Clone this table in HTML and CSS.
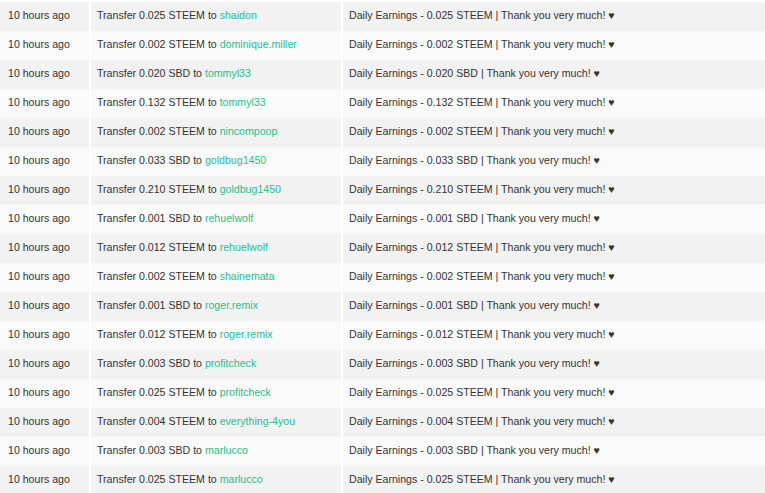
FILE: index.html
```html
<!DOCTYPE html>
<html lang="en">
<head>
    <meta charset="UTF-8">
    <title>Transfer History</title>
    <link rel="stylesheet" href="styles.css">
</head>
<body>

<table class="history">
    <colgroup>
        <col class="col-time">
        <col class="col-op">
        <col class="col-memo">
    </colgroup>
    <tbody>
        <tr><td>10 hours ago</td><td>Transfer 0.025 STEEM to <a href="#">shaidon</a></td><td>Daily Earnings - 0.025 STEEM | Thank you very much! &hearts;</td></tr>
        <tr><td>10 hours ago</td><td>Transfer 0.002 STEEM to <a href="#">dominique.miller</a></td><td>Daily Earnings - 0.002 STEEM | Thank you very much! &hearts;</td></tr>
        <tr><td>10 hours ago</td><td>Transfer 0.020 SBD to <a href="#">tommyl33</a></td><td>Daily Earnings - 0.020 SBD | Thank you very much! &hearts;</td></tr>
        <tr><td>10 hours ago</td><td>Transfer 0.132 STEEM to <a href="#">tommyl33</a></td><td>Daily Earnings - 0.132 STEEM | Thank you very much! &hearts;</td></tr>
        <tr><td>10 hours ago</td><td>Transfer 0.002 STEEM to <a href="#">nincompoop</a></td><td>Daily Earnings - 0.002 STEEM | Thank you very much! &hearts;</td></tr>
        <tr><td>10 hours ago</td><td>Transfer 0.033 SBD to <a href="#">goldbug1450</a></td><td>Daily Earnings - 0.033 SBD | Thank you very much! &hearts;</td></tr>
        <tr><td>10 hours ago</td><td>Transfer 0.210 STEEM to <a href="#">goldbug1450</a></td><td>Daily Earnings - 0.210 STEEM | Thank you very much! &hearts;</td></tr>
        <tr><td>10 hours ago</td><td>Transfer 0.001 SBD to <a href="#">rehuelwolf</a></td><td>Daily Earnings - 0.001 SBD | Thank you very much! &hearts;</td></tr>
        <tr><td>10 hours ago</td><td>Transfer 0.012 STEEM to <a href="#">rehuelwolf</a></td><td>Daily Earnings - 0.012 STEEM | Thank you very much! &hearts;</td></tr>
        <tr><td>10 hours ago</td><td>Transfer 0.002 STEEM to <a href="#">shainemata</a></td><td>Daily Earnings - 0.002 STEEM | Thank you very much! &hearts;</td></tr>
        <tr><td>10 hours ago</td><td>Transfer 0.001 SBD to <a href="#">roger.remix</a></td><td>Daily Earnings - 0.001 SBD | Thank you very much! &hearts;</td></tr>
        <tr><td>10 hours ago</td><td>Transfer 0.012 STEEM to <a href="#">roger.remix</a></td><td>Daily Earnings - 0.012 STEEM | Thank you very much! &hearts;</td></tr>
        <tr><td>10 hours ago</td><td>Transfer 0.003 SBD to <a href="#">profitcheck</a></td><td>Daily Earnings - 0.003 SBD | Thank you very much! &hearts;</td></tr>
        <tr><td>10 hours ago</td><td>Transfer 0.025 STEEM to <a href="#">profitcheck</a></td><td>Daily Earnings - 0.025 STEEM | Thank you very much! &hearts;</td></tr>
        <tr><td>10 hours ago</td><td>Transfer 0.004 STEEM to <a href="#">everything-4you</a></td><td>Daily Earnings - 0.004 STEEM | Thank you very much! &hearts;</td></tr>
        <tr><td>10 hours ago</td><td>Transfer 0.003 SBD to <a href="#">marlucco</a></td><td>Daily Earnings - 0.003 SBD | Thank you very much! &hearts;</td></tr>
        <tr><td>10 hours ago</td><td>Transfer 0.025 STEEM to <a href="#">marlucco</a></td><td>Daily Earnings - 0.025 STEEM | Thank you very much! &hearts;</td></tr>
    </tbody>
</table>

</body>
</html>
```

FILE: styles.css
```css
body {
    margin: 0;
    padding-top: 2px;
    background-color: #fff;
    font-family: "Liberation Sans", Arial, sans-serif;
    font-size: 10.6px;
    color: #333;
}
.history {
    width: 765px;
    table-layout: fixed;
    border-collapse: separate;
    border-spacing: 0;
}
.col-time {
    width: 89px;
}
.col-op {
    width: 252px;
}
.history td {
    box-sizing: border-box;
    height: 29px;
    padding: 0 6px 3px;
    white-space: nowrap;
    overflow: hidden;
    vertical-align: middle;
}
.history td:first-child {
    padding-left: 8px;
}
.history td + td {
    border-left: 2px solid #fff;
}
.history tr:nth-child(odd) td {
    background-color: #f2f2f2;
}
.history tr:nth-child(even) td {
    background-color: #fafafa;
}
.history a {
    color: #1fbf8f;
    text-decoration: none;
}
```
